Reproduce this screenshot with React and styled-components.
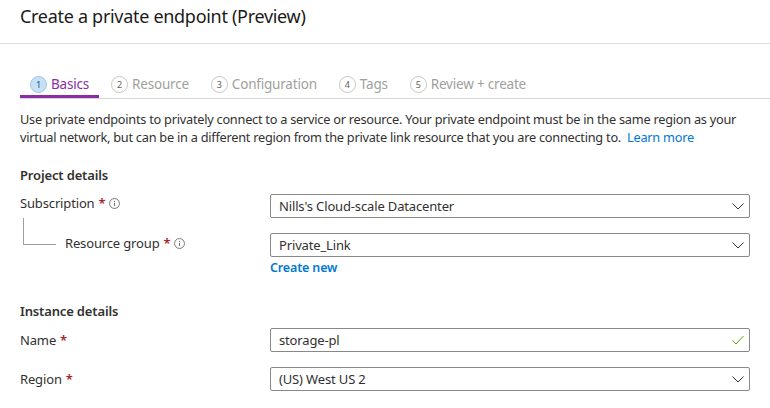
import React from "react";
import styled, { createGlobalStyle, css } from "styled-components";

const GlobalStyle = createGlobalStyle`
    html, body {
        margin: 0;
        padding: 0;
        background: #ffffff;
    }

    body {
        font-family: "Segoe UI", "Noto Sans", sans-serif;
        color: #323130;
        width: 770px;
        height: 408px;
        overflow: hidden;
    }
`;

const Header = styled.header`
    height: 44px;
    border-bottom: 1px solid #e1dfdd;
    padding: 0 20px;
    box-sizing: border-box;

    h1 {
        margin: 0;
        font-size: 18px;
        font-weight: 400;
        line-height: 32px;
        color: #1b1a19;
        letter-spacing: -0.3px;
    }
`;

const Body = styled.main`
    padding: 0 0 0 20px;
`;

const TabBar = styled.nav`
    display: flex;
    gap: 2px;
    margin-top: 27px;
    border-bottom: 1px solid #d6d6d6;
`;

const Tab = styled.div`
    display: flex;
    align-items: center;
    gap: 4px;
    padding: 3px 10px 1px 10px;
    font-size: 13.5px;
    line-height: 20px;
    letter-spacing: -0.2px;
    color: ${({ $active }) => ($active ? "#8a2da5" : "#a19f9d")};
    border-bottom: 3px solid ${({ $active }) => ($active ? "#8a2da5" : "transparent")};
`;

const StepCircle = styled.span`
    width: 17px;
    height: 17px;
    border-radius: 50%;
    box-sizing: border-box;
    display: inline-flex;
    align-items: center;
    justify-content: center;
    font-size: 9px;
    line-height: 1;
    border: 1px solid #c8c6c4;
    color: #605e5c;
    background: #ffffff;

    ${({ $active }) => $active && css`
        background: #c7e0f4;
        border-color: #9cc7ec;
        color: #005a9e;
    `}
`;

const Intro = styled.p`
    margin: 11px 0 0 0;
    font-size: 12.75px;
    line-height: 18px;
    white-space: nowrap;
    letter-spacing: -0.25px;

    a {
        color: #0078d4;
        text-decoration: none;
        margin-left: 6px;
    }
`;

const SectionTitle = styled.h2`
    margin: ${({ $top }) => $top}px 0 0 0;
    font-size: 13px;
    font-weight: 600;
    line-height: 20px;
    letter-spacing: -0.15px;
`;

const Row = styled.div`
    display: grid;
    grid-template-columns: 250px 480px;
    align-items: ${({ $center }) => ($center ? "center" : "start")};
    margin-top: ${({ $top }) => $top}px;
`;

const Label = styled.div`
    display: flex;
    align-items: center;
    gap: 4px;
    font-size: 13px;
    line-height: 18px;
    letter-spacing: -0.15px;
    padding-left: ${({ $indent }) => ($indent ? 45 : 0)}px;
    margin-top: ${({ $indent }) => ($indent ? 1 : 0)}px;
    position: relative;
`;

const TreeLine = styled.span`
    position: absolute;
    left: 3px;
    top: -16px;
    width: 32px;
    height: 26px;
    border-left: 1px solid #a19f9d;
    border-bottom: 1px solid #a19f9d;
`;

const Required = styled.span`
    color: #a4262c;
    font-weight: 600;
`;

const Field = styled.div`
    height: 24px;
    box-sizing: border-box;
    border: 1px solid #8a8886;
    border-radius: 2px;
    display: flex;
    align-items: center;
    justify-content: space-between;
    padding: 0 4px 0 8px;
    font-size: 13px;
    letter-spacing: -0.15px;
    color: #323130;
`;

const FieldColumn = styled.div`
    display: flex;
    flex-direction: column;
`;

const CreateLink = styled.a`
    color: #0078d4;
    font-weight: 600;
    font-size: 12.5px;
    line-height: 18px;
    margin-top: 2px;
    letter-spacing: -0.15px;
    text-decoration: none;
`;

const InfoIcon = () => (
    <svg width="11" height="11" viewBox="0 0 12 12">
        <circle cx="6" cy="6" r="5.4" fill="none" stroke="#605e5c" strokeWidth="0.9" />
        <circle cx="6" cy="3.6" r="0.7" fill="#605e5c" />
        <line x1="6" y1="5.2" x2="6" y2="8.8" stroke="#605e5c" strokeWidth="1" />
    </svg>
);

const Chevron = () => (
    <svg width="14" height="14" viewBox="0 0 14 14">
        <polyline points="1.5,4.5 7,10 12.5,4.5" fill="none" stroke="#323130" strokeWidth="1" />
    </svg>
);

const Check = () => (
    <svg width="14" height="14" viewBox="0 0 14 14">
        <polyline points="1.5,7.5 5,11 12.5,3" fill="none" stroke="#57a300" strokeWidth="1" />
    </svg>
);

const steps = ["Basics", "Resource", "Configuration", "Tags", "Review + create"];

const App = () => {
    return (
        <>
            <GlobalStyle />
            <Header>
                <h1>Create a private endpoint (Preview)</h1>
            </Header>
            <Body>
                <TabBar>
                    {steps.map((s, i) => (
                        <Tab key={s} $active={i === 0}>
                            <StepCircle $active={i === 0}>{i + 1}</StepCircle>
                            {s}
                        </Tab>
                    ))}
                </TabBar>
                <Intro>
                    Use private endpoints to privately connect to a service or resource. Your private endpoint must be in the same region as your
                    <br />
                    virtual network, but can be in a different region from the private link resource that you are connecting to.
                    <a href="#">Learn more</a>
                </Intro>

                <SectionTitle $top={19}>Project details</SectionTitle>
                <Row $top={9}>
                    <Label>Subscription <Required>*</Required> <InfoIcon /></Label>
                    <Field>Nills's Cloud-scale Datacenter <Chevron /></Field>
                </Row>
                <Row $top={15}>
                    <Label $indent>
                        <TreeLine />
                        Resource group <Required>*</Required> <InfoIcon />
                    </Label>
                    <FieldColumn>
                        <Field>Private_Link <Chevron /></Field>
                        <CreateLink href="#">Create new</CreateLink>
                    </FieldColumn>
                </Row>

                <SectionTitle $top={24}>Instance details</SectionTitle>
                <Row $top={7} $center>
                    <Label>Name <Required>*</Required></Label>
                    <Field>storage-pl <Check /></Field>
                </Row>
                <Row $top={15} $center>
                    <Label>Region <Required>*</Required></Label>
                    <Field>(US) West US 2 <Chevron /></Field>
                </Row>
            </Body>
        </>
    );
};

export default App;
